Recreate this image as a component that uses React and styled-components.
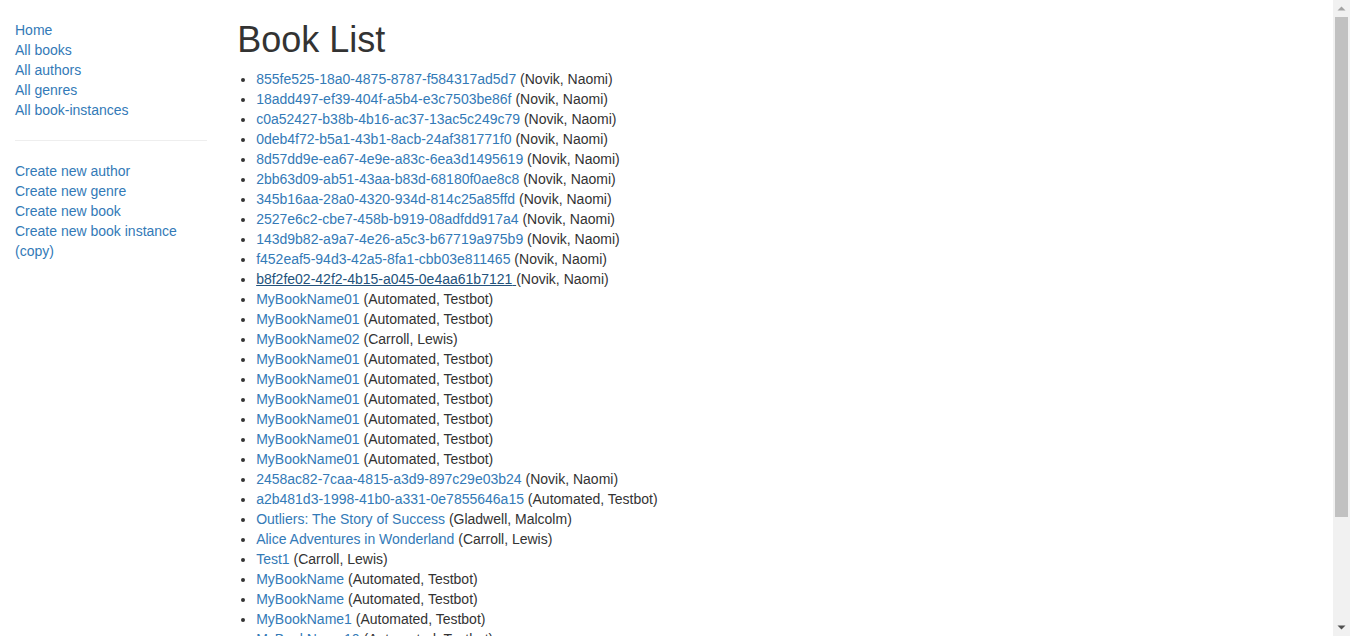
import styled, { createGlobalStyle } from 'styled-components';

const GlobalStyle = createGlobalStyle`
  html, body {
    scrollbar-width: none;
  }
  body {
    margin: 0;
    font-family: "Liberation Sans", Arial, sans-serif;
    font-size: 14px;
    line-height: 1.42857143;
    color: #333;
    background: #fff;
  }
`;

const Shell = styled.div`
  display: flex;
  align-items: flex-start;
`;

const Page = styled.div`
  flex: 1;
  min-width: 0;
  padding: 0 15px;
`;

const ScrollTrack = styled.div`
  position: sticky;
  top: 0;
  flex: 0 0 17px;
  height: 100vh;
  display: flex;
  flex-direction: column;
  background: #f1f1f1;
`;

const ScrollButton = styled.div`
  height: 17px;
  display: flex;
  align-items: center;
  justify-content: center;
`;

const ScrollArea = styled.div`
  flex: 1;
  padding: 0 2px;
`;

const Thumb = styled.div`
  height: 83%;
  background: #c1c1c1;
`;

const Row = styled.div`
  display: grid;
  grid-template-columns: 2fr 10fr;
  margin: 0 -15px;
`;

const Col = styled.div`
  padding: 0 15px;
  min-width: 0;
`;

const SideNav = styled.ul`
  margin: 20px 0 10px;
  padding: 0;
  list-style: none;
`;

const Divider = styled.hr`
  margin: 20px 0;
  border: 0;
  border-top: 1px solid #eee;
`;

const Link = styled.a`
  color: ${(p) => (p.$hover ? '#23527c' : '#337ab7')};
  text-decoration: ${(p) => (p.$hover ? 'underline' : 'none')};
  cursor: pointer;
`;

const Title = styled.h1`
  margin: 20px 0 9px;
  font-size: 36px;
  font-weight: 500;
  line-height: 1.1;
  color: #333;
  font-family: inherit;
`;

const BookList = styled.ul`
  margin: 0 0 10px;
  padding-left: 19px;
`;

const Arrow = ({ down }) => (
  <svg width="9" height="5" viewBox="0 0 9 5">
    {down ? (
      <path d="M0.5 0.5h8L4.5 4.5z" fill="#505050" />
    ) : (
      <path d="M0.5 4.5h8L4.5 0.5z" fill="#a3a3a3" />
    )}
  </svg>
);

const navTop = ['Home', 'All books', 'All authors', 'All genres', 'All book-instances'];
const navCreate = [
  'Create new author',
  'Create new genre',
  'Create new book',
  'Create new book instance (copy)',
];

const books = [
  ['855fe525-18a0-4875-8787-f584317ad5d7', 'Novik, Naomi'],
  ['18add497-ef39-404f-a5b4-e3c7503be86f', 'Novik, Naomi'],
  ['c0a52427-b38b-4b16-ac37-13ac5c249c79', 'Novik, Naomi'],
  ['0deb4f72-b5a1-43b1-8acb-24af381771f0', 'Novik, Naomi'],
  ['8d57dd9e-ea67-4e9e-a83c-6ea3d1495619', 'Novik, Naomi'],
  ['2bb63d09-ab51-43aa-b83d-68180f0ae8c8', 'Novik, Naomi'],
  ['345b16aa-28a0-4320-934d-814c25a85ffd', 'Novik, Naomi'],
  ['2527e6c2-cbe7-458b-b919-08adfdd917a4', 'Novik, Naomi'],
  ['143d9b82-a9a7-4e26-a5c3-b67719a975b9', 'Novik, Naomi'],
  ['f452eaf5-94d3-42a5-8fa1-cbb03e811465', 'Novik, Naomi'],
  ['b8f2fe02-42f2-4b15-a045-0e4aa61b7121', 'Novik, Naomi', true],
  ['MyBookName01', 'Automated, Testbot'],
  ['MyBookName01', 'Automated, Testbot'],
  ['MyBookName02', 'Carroll, Lewis'],
  ['MyBookName01', 'Automated, Testbot'],
  ['MyBookName01', 'Automated, Testbot'],
  ['MyBookName01', 'Automated, Testbot'],
  ['MyBookName01', 'Automated, Testbot'],
  ['MyBookName01', 'Automated, Testbot'],
  ['MyBookName01', 'Automated, Testbot'],
  ['2458ac82-7caa-4815-a3d9-897c29e03b24', 'Novik, Naomi'],
  ['a2b481d3-1998-41b0-a331-0e7855646a15', 'Automated, Testbot'],
  ['Outliers: The Story of Success', 'Gladwell, Malcolm'],
  ['Alice Adventures in Wonderland', 'Carroll, Lewis'],
  ['Test1', 'Carroll, Lewis'],
  ['MyBookName', 'Automated, Testbot'],
  ['MyBookName', 'Automated, Testbot'],
  ['MyBookName1', 'Automated, Testbot'],
  ['MyBookName10', 'Automated, Testbot'],
  ['MyBookName11', 'Automated, Testbot'],
  ['MyBookName12', 'Automated, Testbot'],
  ['MyBookName13', 'Automated, Testbot'],
  ['MyBookName14', 'Automated, Testbot'],
  ['MyBookName15', 'Automated, Testbot'],
];

const App = () => {
  return (
    <Shell>
      <GlobalStyle />
      <Page>
        <Row>
          <Col>
            <SideNav>
              {navTop.map((label) => (
                <li key={label}>
                  <Link>{label}</Link>
                </li>
              ))}
              <li>
                <Divider />
              </li>
              {navCreate.map((label) => (
                <li key={label}>
                  <Link>{label}</Link>
                </li>
              ))}
            </SideNav>
          </Col>
          <Col>
            <Title>Book List</Title>
            <BookList>
              {books.map(([title, author, hover], i) => (
                <li key={i}>
                  <Link $hover={hover}>{title} </Link>({author})
                </li>
              ))}
            </BookList>
          </Col>
        </Row>
      </Page>
      <ScrollTrack>
        <ScrollButton>
          <Arrow />
        </ScrollButton>
        <ScrollArea>
          <Thumb />
        </ScrollArea>
        <ScrollButton>
          <Arrow down />
        </ScrollButton>
      </ScrollTrack>
    </Shell>
  );
};

export default App;
